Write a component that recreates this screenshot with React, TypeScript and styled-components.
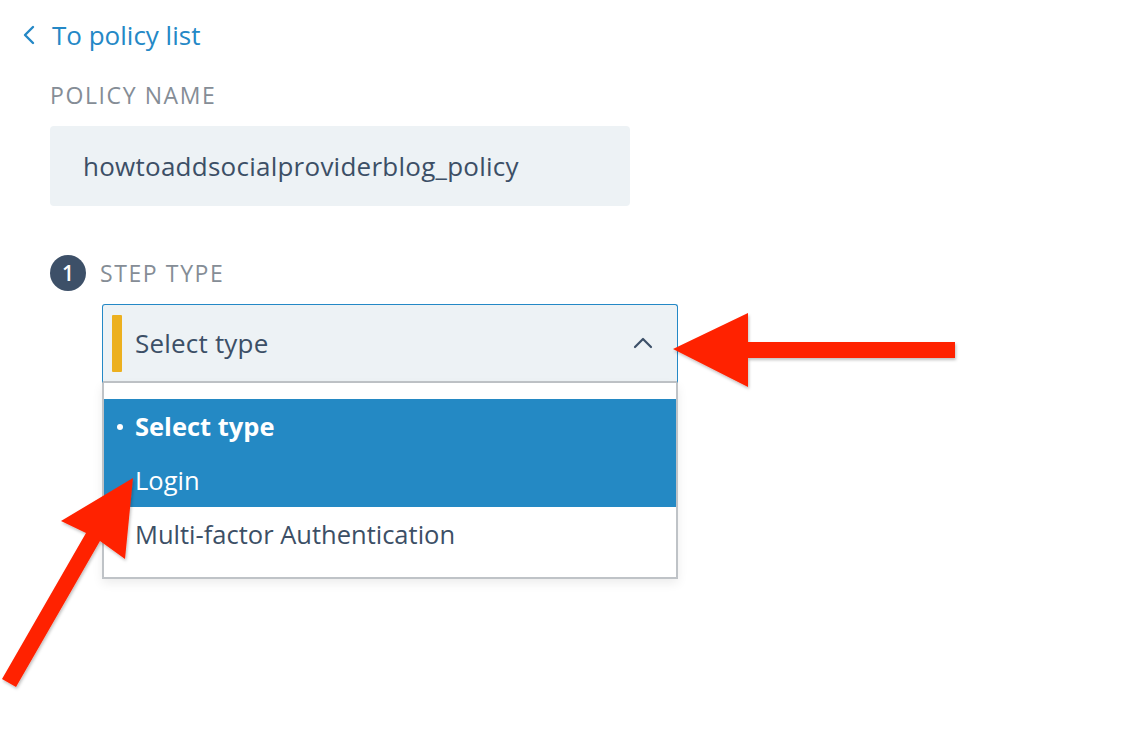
import React from "react";
import styled, { createGlobalStyle } from "styled-components";

const Global = createGlobalStyle`
  html, body { margin: 0; padding: 0; background: #ffffff; }
  body { font-family: "Open Sans", "Lato", Arial, sans-serif; -webkit-font-smoothing: antialiased; }
  * { box-sizing: border-box; }
`;

const Page = styled.div`
  position: relative;
  width: 1124px;
  height: 736px;
  overflow: hidden;
`;

const BackLink = styled.a`
  display: flex;
  align-items: center;
  gap: 16px;
  margin: 17px 0 0 22px;
  height: 36px;
  color: #2488c6;
  font-size: 26px;
  text-decoration: none;
  cursor: pointer;
`;

const Content = styled.div`
  padding-left: 50px;
  display: flex;
  flex-direction: column;
`;

const FieldLabel = styled.div`
  font-size: 23px;
  color: #858d96;
  letter-spacing: 1.6px;
  text-transform: uppercase;
  line-height: 24px;
`;

const NameLabel = styled(FieldLabel)`
  margin-top: 30px;
`;

const NameInput = styled.div`
  margin-top: 19px;
  width: 580px;
  height: 80px;
  background: #edf2f5;
  border-radius: 4px;
  display: flex;
  align-items: center;
  padding-left: 33px;
  font-size: 26px;
  letter-spacing: 0.25px;
  color: #3c4f66;
`;

const StepRow = styled.div`
  margin-top: 49px;
  display: flex;
  align-items: center;
  gap: 14px;
`;

const StepBadge = styled.div`
  width: 36px;
  height: 36px;
  border-radius: 50%;
  background: #3d5068;
  color: #ffffff;
  font-size: 21px;
  font-weight: 600;
  letter-spacing: 0;
  display: flex;
  align-items: center;
  justify-content: center;
`;

const SelectBox = styled.div`
  margin: 13px 0 0 52px;
  width: 576px;
  display: flex;
  flex-direction: column;
`;

const SelectControl = styled.div`
  height: 79px;
  background: #edf2f5;
  border: 1px solid #2488c6;
  border-bottom: 2px solid #bfc3c7;
  border-radius: 3px 3px 0 0;
  display: flex;
  align-items: center;
  padding: 0 24px 0 9px;
`;

const Accent = styled.div`
  width: 10px;
  height: 57px;
  background: #ecb01f;
  border-radius: 1px;
`;

const SelectValue = styled.div`
  flex: 1;
  margin-left: 13px;
  font-size: 26px;
  letter-spacing: 0.2px;
  color: #3c4f66;
`;

const Menu = styled.ul`
  list-style: none;
  margin: 0;
  padding: 16px 0 16px;
  background: #ffffff;
  border: 2px solid #bfc3c7;
  border-top: none;
  box-shadow: 0 4px 10px rgba(0, 0, 0, 0.08);
`;

const Option = styled.li<{ $active?: boolean; $bold?: boolean }>`
  height: 54px;
  display: flex;
  align-items: center;
  padding-left: 31px;
  position: relative;
  font-size: 25.5px;
  font-weight: ${(p) => (p.$bold ? 700 : 400)};
  background: ${(p) => (p.$active ? "#2489c4" : "#ffffff")};
  color: ${(p) => (p.$active ? "#ffffff" : "#3c4f66")};
`;

const Bullet = styled.span`
  position: absolute;
  left: 13px;
  top: 50%;
  width: 6px;
  height: 6px;
  margin-top: -2px;
  border-radius: 50%;
  background: #ffffff;
`;

const Overlay = styled.svg`
  position: absolute;
  left: 0;
  top: 0;
  pointer-events: none;
`;

export default function App() {
  return (
    <>
      <Global />
      <Page>
        <BackLink>
          <svg width="14" height="20" viewBox="0 0 14 20">
            <path d="M11 2 L3 10 L11 18" fill="none" stroke="#2488c6" strokeWidth="2.4" strokeLinecap="round" strokeLinejoin="round" />
          </svg>
          To policy list
        </BackLink>
        <Content>
          <NameLabel>Policy name</NameLabel>
          <NameInput>howtoaddsocialproviderblog_policy</NameInput>
          <StepRow>
            <StepBadge>1</StepBadge>
            <FieldLabel>Step type</FieldLabel>
          </StepRow>
        </Content>
        <Content>
          <SelectBox>
            <SelectControl>
              <Accent />
              <SelectValue>Select type</SelectValue>
              <svg width="20" height="12" viewBox="0 0 20 12">
                <path d="M2 10 L10 2 L18 10" fill="none" stroke="#3d5068" strokeWidth="2.2" strokeLinecap="round" strokeLinejoin="round" />
              </svg>
            </SelectControl>
            <Menu>
              <Option $active $bold>
                <Bullet />
                Select type
              </Option>
              <Option $active>Login</Option>
              <Option>Multi-factor Authentication</Option>
            </Menu>
          </SelectBox>
        </Content>
        <Overlay width="1124" height="736" viewBox="0 0 1124 736">
          <defs>
            <filter id="sh" x="-10%" y="-10%" width="120%" height="130%">
              <feDropShadow dx="1" dy="2" stdDeviation="1.5" floodColor="#000" floodOpacity="0.25" />
            </filter>
          </defs>
          <g filter="url(#sh)" fill="#ff2200">
            <polygon points="673,349 748,313 748,342 955,342 955,358 748,358 748,387" />
            <polygon points="133,478 125,559 100,541 16,687 2,679 86,533 61,521" />
          </g>
        </Overlay>
      </Page>
    </>
  );
}
